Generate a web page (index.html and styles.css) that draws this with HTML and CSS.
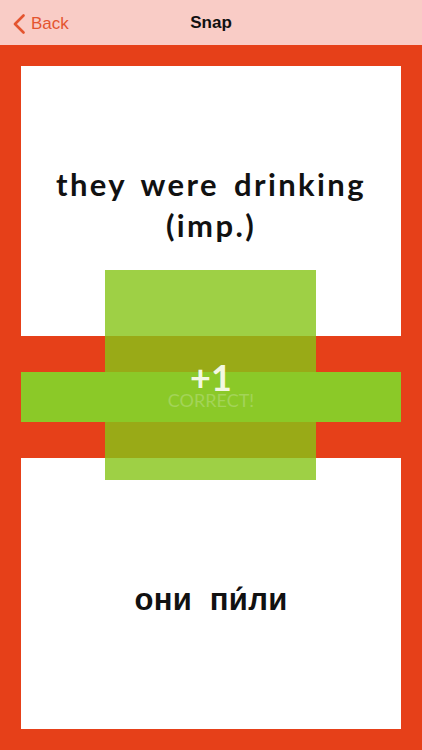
FILE: index.html
```html
<!DOCTYPE html>
<html>
<head>
<meta charset="utf-8">
<link rel="stylesheet" href="styles.css">
</head>
<body>
<div class="app">
  <header class="nav">
    <div class="back">
      <svg class="chev" width="14" height="20" viewBox="0 0 14 20"><path d="M11.5 1.5 L3 10 L11.5 18.5" fill="none" stroke="#e4542f" stroke-width="2.6" stroke-linecap="round" stroke-linejoin="round"/></svg>
      <span>Back</span>
    </div>
    <div class="title">Snap</div>
  </header>
  <main class="board">
    <section class="card top"><p class="en">they were drinking<br>(imp.)</p></section>
    <section class="card bottom"><p class="ru">они&nbsp; пи́ли</p></section>
    <div class="square"></div>
    <div class="band"></div>
    <div class="score">
      <div class="plus">+1</div>
      <div class="correct">CORRECT!</div>
    </div>
  </main>
</div>
</body>
</html>
```
FILE: styles.css
```css
html, body { margin: 0; padding: 0; }
body { width: 422px; height: 750px; overflow: hidden; background: #e64019; }
.app { display: flex; flex-direction: column; height: 750px; }
.nav {
  height: 45px; background: #f9ccc6; position: relative;
  display: flex; align-items: center; justify-content: center;
  font-family: "Liberation Sans", Arial, sans-serif;
}
.back { position: absolute; left: 12px; top: 13px; display: flex; align-items: center; gap: 5px; color: #e4542f; font-size: 17px; }
.back span { margin-top: 1px; }
.title { font-weight: bold; font-size: 17px; color: #111; }
.board {
  flex: 1; position: relative; padding: 21px 21px 21px 21px;
  display: flex; flex-direction: column; gap: 122px;
}
.card { background: #fff; display: flex; align-items: center; justify-content: center; text-align: center; }
.card p { margin: 0; }
.top { height: 270px; }
.bottom { height: 271px; }
.en { font-family: Lato, sans-serif; font-weight: 700; font-size: 31px; line-height: 41px; color: #111; padding-top: 8px; letter-spacing: 2.4px; word-spacing: 5px; }
.ru { font-family: "Liberation Sans", Arial, sans-serif; font-weight: 700; font-size: 31px; letter-spacing: 0.3px; color: #111; padding-top: 12px; }
.square {
  position: absolute; left: 105px; top: 225px; width: 211px; height: 210px;
  background: rgba(134, 196, 22, 0.8);
}
.band { position: absolute; left: 21px; right: 21px; top: 327px; height: 50px; background: #8bc928; }
.score { position: absolute; left: 21px; right: 21px; top: 317px; text-align: center; font-family: Lato, sans-serif; }
.plus { font-size: 36px; font-weight: 700; color: #f3f8e2; line-height: 30px; }
.correct { font-size: 18px; color: #a3d458; line-height: 16px; }
```
